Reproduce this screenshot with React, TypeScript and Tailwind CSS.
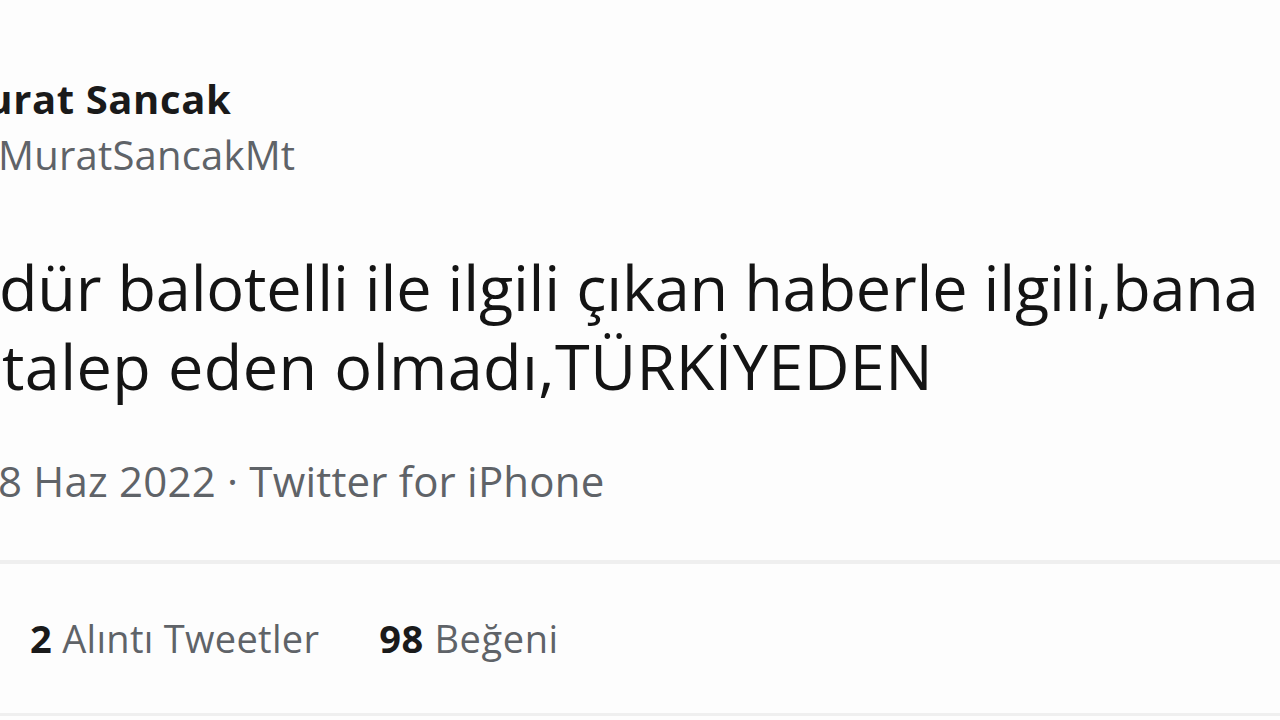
import React from "react";

export default function App() {
  const font = { fontFamily: '"Open Sans", "Noto Sans", "Liberation Sans", sans-serif' };
  return (
    <div className="w-[1280px] h-[720px] overflow-hidden bg-[#fdfdfd] text-[#141414]" style={font}>
      <div className="pt-[75px] flex flex-col">
        <div className="overflow-hidden whitespace-nowrap">
          <div className="ml-[-52px] text-[40px] leading-[48px] font-bold tracking-[0.6px] text-[#1a1a1a]">Murat Sancak</div>
        </div>
        <div className="mt-[8px] overflow-hidden whitespace-nowrap">
          <div className="ml-[-38px] text-[40px] leading-[48px] tracking-[0.2px] text-[#5f6368]">@MuratSancakMt</div>
        </div>
        <div className="mt-[68px] text-[63px] leading-[79px] text-[#141414] whitespace-nowrap">
          <div className="ml-[-1px] tracking-[-0.2px]">dür balotelli ile ilgili çıkan haberle ilgili,bana</div>
          <div className="ml-[2px] tracking-[0.4px]">talep eden olmadı,TÜRKİYEDEN</div>
        </div>
        <div className="mt-[51px] overflow-hidden whitespace-nowrap">
          <div className="ml-[-2px] text-[42px] leading-[50px] tracking-[0.2px] text-[#5f6368]">8 Haz 2022 · Twitter for iPhone</div>
        </div>
        <div className="mt-[54px] h-[4px] bg-[#efefef]" />
        <div className="mt-[50px] flex items-baseline gap-[60px] pl-[30px] text-[38px] leading-[48px] whitespace-nowrap">
          <div className="tracking-[0.3px]">
            <span className="font-bold text-[#1a1a1a]">2</span>{" "}
            <span className="text-[#5f6368]">Alıntı Tweetler</span>
          </div>
          <div className="tracking-[0.6px]">
            <span className="font-bold text-[#1a1a1a]">98</span>{" "}
            <span className="text-[#5f6368]">Beğeni</span>
          </div>
        </div>
        <div className="mt-[51px] h-[3px] bg-[#efefef]" />
      </div>
    </div>
  );
}
